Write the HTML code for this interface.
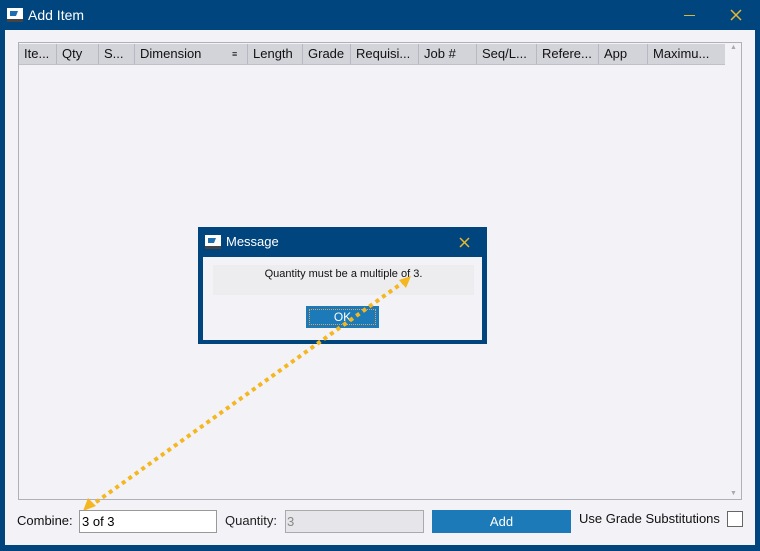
<!DOCTYPE html>
<html><head><style>
body{margin:0;width:760px;height:551px;background:#00457d;font-family:"Liberation Sans",sans-serif;position:relative;overflow:hidden}
.a{position:absolute}
.t{color:#fff;font-size:14px}
.hd{top:44px;height:20px;background:#d3d3da;border-bottom:1px solid #c0c0c8;font-size:13px;color:#111;line-height:20px}
.c{position:absolute;top:0;height:20px;border-left:1px solid #b8b8c0;padding-left:5px;box-sizing:border-box;white-space:nowrap}
</style></head><body>
<svg class="a" style="left:7px;top:7px" width="16" height="16"><rect x="0" y="1" width="16" height="11" fill="#fff"/><path d="M3 4h8l-2 5H3z" fill="#1f6fb0"/><rect x="0" y="12" width="16" height="3" fill="#444"/></svg>
<div class="a t" style="left:28px;top:7px">Add Item</div>
<div class="a" style="left:684px;top:15px;width:11px;height:1px;background:#d8b640"></div>
<svg class="a" style="left:730px;top:9px" width="12" height="12"><path d="M1 1L11 11M11 1L1 11" stroke="#e8b830" stroke-width="1.5"/></svg>
<div class="a" style="left:5px;top:30px;width:750px;height:515px;background:#f2f2f7"></div>
<div class="a" style="left:18px;top:42px;width:724px;height:458px;border:1px solid #b0b0b8;box-sizing:border-box;background:#f3f2f7"></div>
<div class="a hd" style="left:19px;width:706px">
<div class="c" style="left:0;border:0">Ite...</div>
<div class="c" style="left:37px">Qty</div>
<div class="c" style="left:79px">S...</div>
<div class="c" style="left:115px">Dimension<span style="position:absolute;left:97px;font-size:9px">&#8801;</span></div>
<div class="c" style="left:228px">Length</div>
<div class="c" style="left:283px">Grade</div>
<div class="c" style="left:331px">Requisi...</div>
<div class="c" style="left:399px">Job #</div>
<div class="c" style="left:457px">Seq/L...</div>
<div class="c" style="left:517px">Refere...</div>
<div class="c" style="left:579px">App</div>
<div class="c" style="left:628px">Maximu...</div>
</div>
<div class="a" style="left:730px;top:44px;font-size:7px;color:#aaa">&#9650;</div>
<div class="a" style="left:730px;top:490px;font-size:7px;color:#aaa">&#9660;</div>
<div class="a" style="left:198px;top:227px;width:289px;height:117px;background:#00457d"></div>
<svg class="a" style="left:205px;top:234px" width="16" height="16"><rect x="0" y="1" width="16" height="11" fill="#fff"/><path d="M3 4h8l-2 5H3z" fill="#1f6fb0"/><rect x="0" y="12" width="16" height="3" fill="#444"/></svg>
<div class="a t" style="left:226px;top:234px;font-size:13px">Message</div>
<svg class="a" style="left:459px;top:237px" width="11" height="11"><path d="M1 1L10 10M10 1L1 10" stroke="#e8b830" stroke-width="1.5"/></svg>
<div class="a" style="left:203px;top:257px;width:279px;height:83px;background:#f3f2f7"></div>
<div class="a" style="left:213px;top:265px;width:261px;height:30px;background:#ededf0;font-size:11px;text-align:center;line-height:18px;color:#111">Quantity must be a multiple of 3.</div>
<div class="a" style="left:306px;top:306px;width:73px;height:22px;background:#1c7ab8;color:#fff;font-size:12px;text-align:center;line-height:22px"><div style="position:absolute;left:3px;top:3px;right:3px;bottom:3px;border:1px dotted #e8a050"></div>OK</div>
<svg class="a" style="left:0;top:0" width="760" height="551"><line x1="405" y1="281" x2="92" y2="505" stroke="#f4b720" stroke-width="4" stroke-dasharray="4 4"/><path d="M411 276L399 280L406 288Z" fill="#f4b720"/><path d="M83 511L88 498L96 506Z" fill="#f4b720"/></svg>
<div class="a" style="left:17px;top:513px;font-size:13px;color:#111">Combine:</div>
<div class="a" style="left:79px;top:510px;width:138px;height:23px;border:1px solid #999;box-sizing:border-box;background:#fff;font-size:13px;padding:3px 2px">3 of 3</div>
<div class="a" style="left:225px;top:513px;font-size:13px;color:#222">Quantity:</div>
<div class="a" style="left:285px;top:510px;width:139px;height:23px;border:1px solid #aaa;box-sizing:border-box;background:#e6e6ea;font-size:13px;padding:3px 1px;color:#888">3</div>
<div class="a" style="left:432px;top:510px;width:139px;height:23px;background:#1c7ab8;color:#fff;font-size:13px;text-align:center;line-height:23px">Add</div>
<div class="a" style="left:579px;top:511px;font-size:13px;color:#111">Use Grade Substitutions</div>
<div class="a" style="left:727px;top:511px;width:16px;height:16px;border:1px solid #666;box-sizing:border-box;background:#fff"></div>
</body></html>
